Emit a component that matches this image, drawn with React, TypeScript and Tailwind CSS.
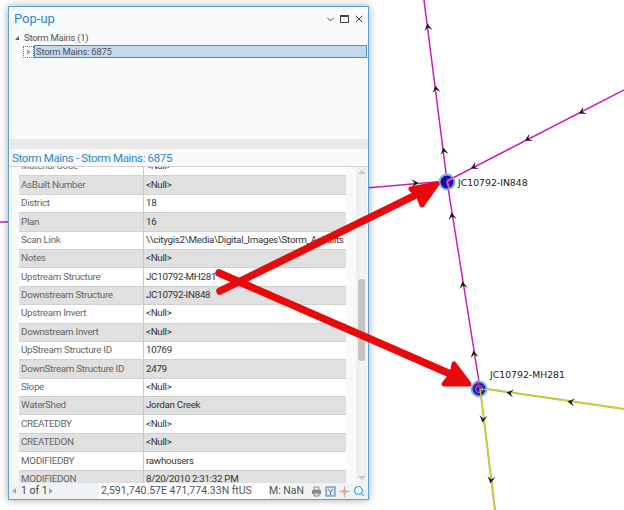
import React from 'react'
import { ChevronDown, Search, X } from 'lucide-react'

const rows = [
  ['AsBuilt Number', '<Null>'],
  ['District', '18'],
  ['Plan', '16'],
  ['Scan Link', '\\\\citygis2\\Media\\Digital_Images\\Storm_Asbuilts'],
  ['Notes', '<Null>'],
  ['Upstream Structure', 'JC10792-MH281'],
  ['Downstream Structure', 'JC10792-IN848'],
  ['Upstream Invert', '<Null>'],
  ['Downstream Invert', '<Null>'],
  ['UpStream Structure ID', '10769'],
  ['DownStream Structure ID', '2479'],
  ['Slope', '<Null>'],
  ['WaterShed', 'Jordan Creek'],
  ['CREATEDBY', '<Null>'],
  ['CREATEDON', '<Null>'],
  ['MODIFIEDBY', 'rawhousers'],
  ['MODIFIEDON', '8/20/2010 2:31:32 PM'],
]

// little flow arrows on the mains: x, y, direction in degrees (0 = pointing up)
const flowArrows = [
  [428, 27, -8],
  [436, 89, -8],
  [444, 151, -8],
  [452, 216, -9],
  [463, 285, -9],
  [474, 354, -9],
  [415, 183, 85],
  [474, 167, -117],
  [528, 139, -117],
  [582, 112, -117],
  [510, 393, -81],
  [571, 402, -81],
  [483, 419, 188],
  [491, 480, 188],
]

function MapLayer() {
  return (
    <svg className="absolute inset-0" width="624" height="510" viewBox="0 0 624 510">
      <g fill="none" stroke="#c81eb4" strokeWidth="1.5">
        <path d="M424 0L447 181L480 388" />
        <path d="M624 90L447 181" />
        <path d="M366 188L447 181" />
        <path d="M0 222H9" />
      </g>
      <g fill="none" stroke="#55550a" strokeWidth="2" opacity="0.5">
        <path d="M480 388L624 409" />
        <path d="M480 388L495 510" />
      </g>
      <g fill="none" stroke="#d4d420" strokeWidth="1.3">
        <path d="M480 388L624 409" />
        <path d="M480 388L495 510" />
      </g>
      {flowArrows.map(([x, y, r], i) => (
        <path
          key={i}
          d="M-4 3.5L0 -3.5L4 3.5L0 0.5Z"
          fill="#1a1a1a"
          transform={`translate(${x} ${y}) rotate(${r})`}
        />
      ))}
      <circle cx="447" cy="182" r="8.5" fill="#7ab8ee" />
      <circle cx="447" cy="182" r="6.5" fill="#10109c" />
      <path d="M447 181L453 178M447 181L449 188" stroke="#e050d0" strokeWidth="2" />
      <circle cx="479" cy="389" r="8.5" fill="#7ab8ee" />
      <circle cx="479" cy="389" r="6.5" fill="#2a1e9c" />
      <circle cx="479" cy="389" r="3.5" fill="none" stroke="#a070d8" strokeWidth="1" />
      <path d="M477 381L480 389" stroke="#c81eb4" strokeWidth="1.5" />
      <path d="M480 389L490 390M480 389L481 397" stroke="#d4d420" strokeWidth="1.2" />
    </svg>
  )
}

function ArrowsLayer() {
  return (
    <svg className="absolute inset-0 pointer-events-none" width="624" height="510" viewBox="0 0 624 510">
      <g stroke="#e80a0a" strokeLinecap="round" strokeLinejoin="round">
        <path d="M220 291L424 191" fill="none" strokeWidth="7.5" />
        <path d="M437 184L411 189L418 195L422 205Z" fill="#e80a0a" strokeWidth="5" />
        <path d="M219 273L455 376" fill="none" strokeWidth="7.5" />
        <path d="M469 384L454 364L452 374L444 384Z" fill="#e80a0a" strokeWidth="5" />
      </g>
    </svg>
  )
}

function Row({ label, value, even }: { label: string; value: string; even: boolean }) {
  return (
    <div className={`flex h-[18.4px] border-b border-[#d0d0d0] ${even ? 'bg-[#e0e0e0]' : 'bg-white'}`}>
      <div className="w-[125px] shrink-0 pl-[2px] flex items-center whitespace-nowrap text-[#666] border-r border-[#c8c8c8]">{label}</div>
      <div className="flex-1 min-w-0 pl-[2px] flex items-center text-[#333] whitespace-nowrap overflow-hidden">{value}</div>
    </div>
  )
}

export default function App() {
  return (
    <div className="relative w-[624px] h-[510px] bg-white overflow-hidden font-['Roboto',sans-serif]">
      <MapLayer />
      <div className="relative ml-[8px] mt-[6px] w-[361px] h-[494px] flex flex-col bg-[#f8f9f9] border border-[#5aa2d4] shadow-[0_0_8px_rgba(0,0,0,0.35)]">
        <div className="flex items-center justify-between h-[24px] pl-[5px] pr-[3px] shrink-0">
          <span className="text-[13px] text-[#2a8ac8]">Pop-up</span>
          <div className="flex items-center gap-[4px] text-[#444]">
            <ChevronDown size={11} />
            <span className="w-[9px] h-[8px] border border-[#444] border-t-2" />
            <X size={12} />
          </div>
        </div>
        <div className="h-[108px] shrink-0 text-[9.5px] tracking-[-0.25px] text-[#555]">
          <div className="flex items-center h-[12px] pl-[6px] gap-[5px] mt-[1px]">
            <span className="w-0 h-0 border-l-[4px] border-l-transparent border-b-[4px] border-b-[#555]" />
            <span>Storm Mains (1)</span>
          </div>
          <div className="flex items-center h-[13px] mt-[1px] pl-[14px] pr-[1px]">
            <span className="flex items-center justify-center w-[11px] h-[12px] border border-dotted border-[#777]">
              <span className="w-0 h-0 border-y-[3px] border-y-transparent border-l-[4px] border-l-[#aaa]" />
            </span>
            <span className="flex-1 h-[13px] flex items-center pl-[1px] bg-[#c3d9ee] border border-[#4a90c4] leading-none">
              Storm Mains: 6875
            </span>
          </div>
        </div>
        <div className="h-[10px] shrink-0 bg-[#e9e9e9]" />
        <div className="h-[18px] shrink-0 flex items-center pl-[3px] pt-[2px] text-[11.5px] tracking-[-0.35px] text-[#2a8ac8] border-b border-[#d4d4d4]">
          Storm Mains - Storm Mains: 6875
        </div>
        <div className="flex-1 min-h-0 flex">
          <div className="flex-1 min-w-0 pl-[10px] pr-[10px] overflow-hidden">
            <div className="w-[327px] -mt-[9px] text-[9.8px] tracking-[-0.3px]">
              <Row label="Material Code" value="<Null>" even={false} />
              {rows.map(([label, value], i) => (
                <Row key={label} label={label} value={value} even={i % 2 === 0} />
              ))}
            </div>
          </div>
          <div className="w-[11px] mr-[1px] shrink-0 flex flex-col items-center py-[3px] bg-[#f0f0f0]">
            <span className="w-0 h-0 border-x-[4px] border-x-transparent border-b-[4px] border-b-[#c8c8c8]" />
            <span className="w-[7px] h-[82px] mt-[105px] rounded-[3px] bg-[#c4c4c4]" />
            <span className="mt-auto w-0 h-0 border-x-[4px] border-x-transparent border-t-[4px] border-t-[#c8c8c8]" />
          </div>
        </div>
        <div className="h-[16px] shrink-0 flex items-center whitespace-nowrap text-[10.5px] text-[#555] bg-[#f0f3f5] pl-[3px] pr-[3px]">
          <span className="shrink-0 w-0 h-0 border-y-[3px] border-y-transparent border-r-[4px] border-r-[#aaa]" />
          <span className="shrink-0 w-[28px] ml-[5px] text-[#444]">1 of 1</span>
          <span className="shrink-0 w-0 h-0 border-y-[3px] border-y-transparent border-l-[4px] border-l-[#aaa]" />
          <span className="shrink-0 ml-[46px] w-[170px] h-full flex items-center pl-[2px] bg-white">2,591,740.57E 471,774.33N ftUS</span>
          <span className="ml-auto shrink-0">M: NaN</span>
          <span className="shrink-0 flex items-center gap-[3px] ml-[7px]">
            <svg width="11" height="11" viewBox="0 0 11 11">
              <path d="M3 1H8V4H3Z" fill="none" stroke="#888" />
              <path d="M1 4H10V8H1Z" fill="#888" />
              <path d="M3 7H8V10H3Z" fill="#ddd" stroke="#888" />
            </svg>
            <svg width="11" height="11" viewBox="0 0 11 11">
              <rect x="1" y="1" width="9" height="9" fill="#d5e6f0" stroke="#5d7f93" />
              <path d="M3 3L5.5 6V9M8 3L5.5 6" fill="none" stroke="#5d7f93" />
            </svg>
            <svg width="11" height="11" viewBox="0 0 11 11">
              <circle cx="5.5" cy="5.5" r="2.5" fill="#f0b8a8" />
              <path d="M5.5 0V11M0 5.5H11" stroke="#e8a090" />
            </svg>
            <Search size={12} className="text-[#2a8ac8]" />
          </span>
        </div>
      </div>
      <span className="absolute left-[458px] top-[176px] text-[9.3px] text-[#222] font-['DejaVu_Sans',sans-serif]">JC10792-IN848</span>
      <span className="absolute left-[490px] top-[368px] text-[9.3px] text-[#222] font-['DejaVu_Sans',sans-serif]">JC10792-MH281</span>
      <ArrowsLayer />
    </div>
  )
}
